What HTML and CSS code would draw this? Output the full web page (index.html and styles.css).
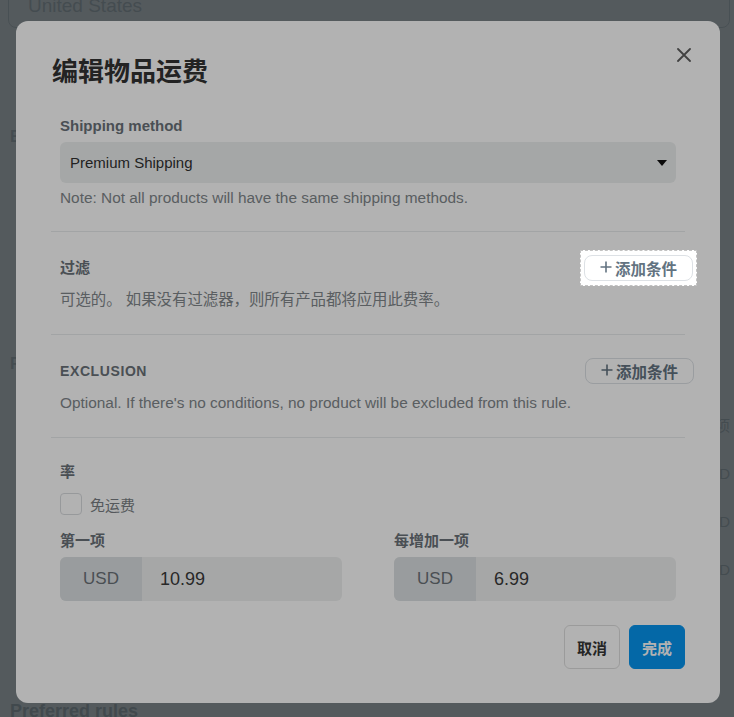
FILE: index.html
```html
<!DOCTYPE html>
<html lang="zh-CN">
<head>
    <meta charset="UTF-8">
    <meta name="viewport" content="width=device-width, initial-scale=1.0">
    <title>编辑物品运费</title>
    <link rel="stylesheet" href="styles.css">
</head>
<body>
<div class="page">
    <div class="page-field">United States</div>
    <div class="page-block">
        <div class="page-label">Exclusion</div>
    </div>
    <div class="page-block page-block-tall">
        <div class="page-label">Rate</div>
        <div class="page-rates">
            <span class="page-rate">每增加一项</span>
            <span class="page-rate">USD</span>
            <span class="page-rate">USD</span>
            <span class="page-rate">USD</span>
        </div>
    </div>
    <h2 class="page-heading">Preferred rules</h2>
</div>

<div class="backdrop">
    <div class="modal">
        <button class="close" aria-label="关闭">
            <svg width="14" height="14" viewBox="0 0 14 14"><path d="M1 1L13 13M13 1L1 13" stroke="currentColor" stroke-width="1.8" stroke-linecap="round"/></svg>
        </button>
        <h1 class="modal-title">编辑物品运费</h1>

        <section class="section">
            <div class="label">Shipping method</div>
            <div class="select">Premium Shipping<span class="caret"></span></div>
            <p class="hint">Note: Not all products will have the same shipping methods.</p>
        </section>

        <section class="section">
            <div class="section-head">
                <div class="label">过滤</div>
                <span class="spotlight">
                    <button class="btn-add"><svg class="plus" width="12" height="12" viewBox="0 0 12 12"><path d="M6 0.5V11.5M0.5 6H11.5" stroke="currentColor" stroke-width="1.6"/></svg>添加条件</button>
                </span>
            </div>
            <p class="hint hint-gap">可选的。 如果没有过滤器，则所有产品都将应用此费率。</p>
        </section>

        <section class="section">
            <div class="section-head">
                <div class="label label-caps">EXCLUSION</div>
                <span class="add-wrap">
                    <button class="btn-add"><svg class="plus" width="12" height="12" viewBox="0 0 12 12"><path d="M6 0.5V11.5M0.5 6H11.5" stroke="currentColor" stroke-width="1.6"/></svg>添加条件</button>
                </span>
            </div>
            <p class="hint hint-gap">Optional. If there's no conditions, no product will be excluded from this rule.</p>
        </section>

        <section class="section section-last">
            <div class="label">率</div>
            <label class="check"><span class="check-box"></span>免运费</label>
            <div class="fields">
                <div class="field">
                    <div class="label">第一项</div>
                    <div class="money"><span class="money-unit">USD</span><span class="money-value">10.99</span></div>
                </div>
                <div class="field">
                    <div class="label">每增加一项</div>
                    <div class="money"><span class="money-unit">USD</span><span class="money-value">6.99</span></div>
                </div>
            </div>
        </section>

        <div class="footer">
            <button class="btn btn-cancel">取消</button>
            <button class="btn btn-done">完成</button>
        </div>
    </div>
</div>
</body>
</html>
```

FILE: styles.css
```css
*, *::before, *::after{
    box-sizing: border-box;
    padding: 0;
    margin: 0;
}

body{
    font-family: "Liberation Sans", "Noto Sans CJK SC", sans-serif;
    background-color: #fff;
    overflow: hidden;
}

/* page behind the modal */
.page{
    height: 100vh;
    padding: 0 4px 0 8px;
    display: flex;
    flex-direction: column;
    color: #c4cace;
}

.page-field{
    flex-shrink: 0;
    margin-top: -16px;
    height: 44px;
    border: 1px solid #d3d8db;
    border-radius: 8px;
    padding: 0 19px;
    font-size: 19px;
    line-height: 42px;
}

.page-block{
    flex-shrink: 0;
    height: 220px;
    padding-top: 100px;
}

.page-block-tall{
    height: 453px;
    padding-top: 107px;
    display: flex;
    justify-content: space-between;
}

.page-label{
    font-size: 16px;
    font-weight: bold;
    padding-left: 2px;
}

.page-rates{
    display: flex;
    flex-direction: column;
    align-items: flex-end;
    gap: 30px;
    padding-top: 62px;
    font-size: 15px;
    line-height: 18px;
}

.page-heading{
    flex-shrink: 0;
    font-size: 18px;
    line-height: 21px;
    font-weight: bold;
    color: #b8bfc4;
    padding-left: 2px;
}

.backdrop{
    position: fixed;
    inset: 0;
    background-color: rgba(38, 52, 60, 0.62);
    display: flex;
    justify-content: center;
    align-items: flex-start;
    padding: 21px 0 0 2px;
}

/* modal */
.modal{
    position: relative;
    width: 704px;
    background-color: #fff;
    border-radius: 12px;
    padding: 34px 35px 34px 35px;
}

.close{
    position: absolute;
    top: 27px;
    right: 29px;
    width: 14px;
    height: 14px;
    border: none;
    background: none;
    color: #5e5e5e;
    display: flex;
    cursor: pointer;
}

.modal-title{
    font-size: 26px;
    line-height: 34px;
    font-weight: bold;
    color: #333;
    padding-left: 1px;
    margin-bottom: 4px;
}

.section{
    padding: 23px 9px 24px 9px;
    border-bottom: 1px solid #e8ebed;
}

.section:first-of-type{
    padding-bottom: 23px;
}

.section + .section{
    padding-top: 23px;
}

.section-last{
    border-bottom: none;
    padding-bottom: 0;
    padding-top: 24px !important;
}

.label{
    font-size: 15px;
    line-height: 20px;
    font-weight: bold;
    color: #6a7279;
}

.label-caps{
    font-size: 14px;
    letter-spacing: .6px;
}

.select{
    margin-top: 6px;
    height: 41px;
    background-color: #edf0f0;
    border-radius: 6px;
    padding: 0 9px 0 10px;
    display: flex;
    align-items: center;
    justify-content: space-between;
    font-size: 15px;
    color: #313131;
}

.caret{
    width: 0;
    height: 0;
    border-left: 5px solid transparent;
    border-right: 5px solid transparent;
    border-top: 6px solid #111;
}

.hint{
    margin-top: 5px;
    font-size: 15.4px;
    line-height: 20px;
    color: #81878b;
}

.hint-gap{
    margin-top: 9px;
}

.section-head{
    height: 26px;
    display: flex;
    align-items: center;
    justify-content: space-between;
}

.add-wrap{
    margin-right: -18px;
}

/* tour highlight on the first add button */
.spotlight{
    position: relative;
    z-index: 10;
    padding: 4px 3px;
    margin: -4px -21px -4px 0;
    background-color: #fff;
    border: 1px dashed #c2c2c2;
    display: flex;
    box-shadow: 0 0 0 3000px rgba(0, 0, 0, 0.3);
}

.btn-add{
    height: 26px;
    padding: 0 15px 0 15px;
    background-color: #fff;
    border: 1px solid #dde1e5;
    border-radius: 8px;
    font-family: inherit;
    font-size: 15.5px;
    font-weight: bold;
    color: #637381;
    display: flex;
    align-items: center;
    gap: 3px;
    cursor: pointer;
}

.plus{
    margin-top: -2px;
}

.check{
    margin-top: 11px;
    display: flex;
    align-items: center;
    gap: 8px;
    font-size: 15px;
    color: #7a7f84;
}

.check-box{
    width: 22px;
    height: 22px;
    border: 1px solid #d9dcdf;
    border-radius: 4px;
}

.fields{
    margin-top: 16px;
    display: grid;
    grid-template-columns: 1fr 1fr;
    gap: 52px;
}

.money{
    margin-top: 6px;
    height: 44px;
    display: flex;
    background-color: #eef0f0;
    border-radius: 6px;
    overflow: hidden;
}

.money-unit{
    width: 82px;
    background-color: #dce0e2;
    color: #6b7278;
    font-size: 17px;
    display: flex;
    align-items: center;
    justify-content: center;
}

.money-value{
    padding-left: 18px;
    display: flex;
    align-items: center;
    font-size: 18px;
    color: #3a3a3a;
}

.footer{
    padding-top: 24px;
    display: flex;
    justify-content: flex-end;
    gap: 9px;
}

.btn{
    width: 56px;
    height: 44px;
    border-radius: 6px;
    font-family: inherit;
    font-size: 15px;
    font-weight: bold;
    cursor: pointer;
}

.btn-cancel{
    background-color: #fff;
    border: 1px solid #dfdfdf;
    color: #363636;
}

.btn-done{
    background-color: #0695f0;
    border: 1px solid #0695f0;
    color: #fff;
}
```
